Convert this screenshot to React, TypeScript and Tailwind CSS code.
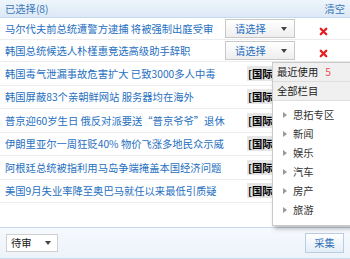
import { X } from 'lucide-react';

const rows = [
  { title: '马尔代夫前总统遭警方逮捕 将被强制出庭受审', select: true },
  { title: '韩国总统候选人朴槿惠竞选高级助手辞职', select: true },
  { title: '韩国毒气泄漏事故危害扩大 已致3000多人中毒' },
  { title: '韩国屏蔽83个亲朝鲜网站 服务器均在海外' },
  { title: '普京迎60岁生日 俄反对派要送“普京爷爷”退休' },
  { title: '伊朗里亚尔一周狂贬40% 物价飞涨多地民众示威' },
  { title: '阿根廷总统被指利用马岛争端掩盖本国经济问题' },
  { title: '美国9月失业率降至奥巴马就任以来最低引质疑' },
];

const channels = ['思拓专区', '新闻', '娱乐', '汽车', '房产', '旅游'];

function Caret() {
  return (
    <span className="h-0 w-0 border-x-[3px] border-t-[4px] border-x-transparent border-t-[#444]" />
  );
}

export default function App() {
  return (
    <div
      className="relative flex h-[259px] w-[350px] flex-col overflow-hidden border-b border-[#c9dbee] bg-white text-[10.3px] text-[#1f6fbf]"
      style={{ fontFamily: '"Noto Sans CJK SC", sans-serif' }}
    >
      <div className="flex h-[18px] shrink-0 items-center justify-between border-b border-[#c6d9ee] bg-gradient-to-b from-[#eef5fc] to-[#dce9f6] px-[5px] text-[#3a78b8]">
        <span>已选择(8)</span>
        <span>清空</span>
      </div>

      <div className="flex flex-col">
        {rows.map((r, i) => (
          <div
            key={i}
            className={`flex items-center border-b border-[#ececec] pl-[5px] ${
              r.select ? 'h-[22px]' : 'h-[23.5px]'
            }`}
          >
            {r.select ? (
              <>
                <span className="w-[220px] shrink-0 whitespace-nowrap">{r.title}</span>
                <div className="flex h-[19px] w-[70px] items-center justify-between border border-[#c8c8c8] bg-gradient-to-b from-white to-[#eeeeee] pl-[9px] pr-[7px]">
                  <span>请选择</span>
                  <Caret />
                </div>
                <X className="ml-[23px] mt-[5px] h-[11px] w-[11px] text-[#e81c1c]" strokeWidth={5} />
              </>
            ) : (
              <>
                <span className="w-[242px] shrink-0 whitespace-nowrap">{r.title}</span>
                <span className="bg-[#e6e6e6] px-[1px] font-bold text-black">[国际]</span>
              </>
            )}
          </div>
        ))}
      </div>

      <div className="flex-1" />

      <div className="flex h-[31px] shrink-0 items-center justify-between border-t border-[#c6d9ee] bg-gradient-to-b from-[#f6f9fd] to-[#edf3fa] px-[6px]">
        <div className="flex h-[18px] w-[52px] items-center justify-between border border-[#cfcfcf] bg-white pl-[4px] pr-[6px] text-[#222]">
          <span>待审</span>
          <Caret />
        </div>
        <div className="flex h-[20px] w-[39px] items-center justify-center border border-[#b9cde3] bg-gradient-to-b from-white to-[#e3edf7] text-[#2f6fb5]">
          采集
        </div>
      </div>

      <div className="absolute left-[272px] top-[62px] w-[80px] border border-[#c9c9c9] bg-white pb-[6px] shadow-[2px_3px_4px_rgba(0,0,0,0.25)]">
        <div className="flex h-[19px] items-center gap-[7px] border-b border-[#ddd] bg-[#f0f0f0] px-[4px] text-[#222]">
          <span>最近使用</span>
          <span className="text-[#f05050]">5</span>
        </div>
        <div className="flex h-[19px] items-center border-b border-[#ddd] bg-[#f0f0f0] px-[4px] text-[#222]">
          全部栏目
        </div>
        <div className="flex flex-col pt-[4px]">
          {channels.map((c) => (
            <div key={c} className="flex h-[19px] items-center gap-[6px] pl-[10px] text-[#333]">
              <span className="h-0 w-0 border-y-[3.5px] border-l-[4px] border-y-transparent border-l-[#999]" />
              <span>{c}</span>
            </div>
          ))}
        </div>
      </div>
    </div>
  );
}
